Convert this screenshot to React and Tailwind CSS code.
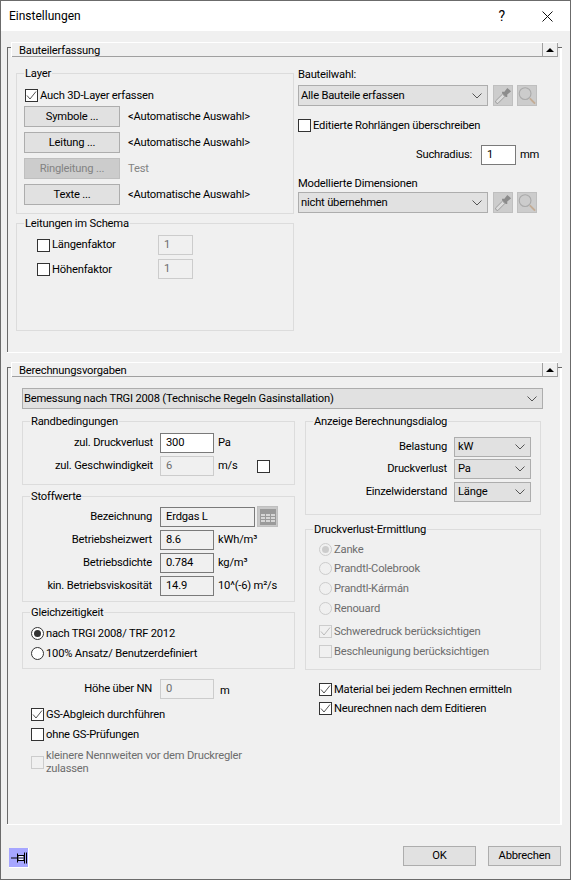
import React from "react";

const Chevron = () => (
  <svg width="10" height="6" viewBox="0 0 10 6" className="shrink-0">
    <path d="M0.5 0.5 L5 5 L9.5 0.5" fill="none" stroke="#555" strokeWidth="1" />
  </svg>
);

const Check = ({ color = "#555" }) => (
  <svg width="11" height="11" viewBox="0 0 11 11">
    <path d="M1 5.5 L4 9 L10 1.5" fill="none" stroke={color} strokeWidth="1" />
  </svg>
);

const CheckBox = ({ checked, disabled, className = "" }) => (
  <span
    className={`flex items-center justify-center w-[13px] h-[13px] shrink-0 border ${
      disabled ? "border-[#cccccc]" : "border-[#333333]"
    } ${disabled ? "bg-[#f0f0f0]" : "bg-white"} ${className}`}
  >
    {checked && <Check color={disabled ? "#bbbbbb" : "#555555"} />}
  </span>
);

const Radio = ({ checked, disabled }) => (
  <span
    className={`flex items-center justify-center w-[13px] h-[13px] shrink-0 rounded-full border ${
      disabled ? "border-[#cccccc]" : "border-[#333333]"
    } ${disabled ? "bg-[#f0f0f0]" : "bg-white"}`}
  >
    {checked && <span className={`w-[7px] h-[7px] rounded-full ${disabled ? "bg-[#cccccc]" : "bg-[#333333]"}`} />}
  </span>
);

const Btn = ({ children, disabled, className = "" }) => (
  <div
    className={`flex items-center justify-center shrink-0 h-[21px] border ${
      disabled ? "bg-[#cccccc] border-[#bfbfbf] text-[#838383]" : "bg-[#e1e1e1] border-[#adadad]"
    } ${className}`}
  >
    {children}
  </div>
);

const Combo = ({ children, className = "", h = "h-[21px]", pl = "pl-[3px]" }) => (
  <div className={`flex items-center justify-between shrink-0 pr-[5px] bg-[#e1e1e1] border border-[#adadad] ${pl} ${h} ${className}`}>
    <span>{children}</span>
    <Chevron />
  </div>
);

const Field = ({ children, kind = "on", className = "" }) => {
  const cls = {
    edit: "bg-white border-[#7a7a7a]",
    on: "bg-[#f0f0f0] border-[#7a7a7a]",
    off: "bg-[#f0f0f0] border-[#cccccc] text-[#6d6d6d]",
  }[kind];
  return <div className={`flex items-center shrink-0 h-[20px] pl-[5px] border ${cls} ${className}`}>{children}</div>;
};

const Group = ({ title, className = "", children }) => (
  <div className={`relative border border-[#dcdcdc] ${className}`}>
    <span className="absolute top-[-7px] left-[7px] px-[1px] bg-[#f0f0f0] leading-[14px] whitespace-nowrap">{title}</span>
    {children}
  </div>
);

const Dropper = () => (
  <svg width="19" height="19" viewBox="0 0 19 19">
    <path d="M2.5 17.5 L1.5 15.5 L9 8 L11.5 10.5 L4 18 Z" fill="#dcdcdc" stroke="#9a9a9a" strokeWidth="1" />
    <path d="M8.5 5.5 L11 5.5 L14 1.5 L18 5 L14 8.5 L14 11 L12.5 11 L8.5 7 Z" fill="#8c8c8c" />
  </svg>
);

const Lens = () => (
  <svg width="19" height="19" viewBox="0 0 19 19">
    <circle cx="7.5" cy="7.5" r="6.2" fill="none" stroke="#aaaaaa" strokeWidth="1.2" />
    <path d="M12.5 12.5 L18 18" stroke="#c4ac94" strokeWidth="2" />
  </svg>
);

const PickRow = ({ label, className = "" }) => (
  <div className={`flex ${className}`}>
    <Combo className="w-[190px]" pl="pl-[2px]">{label}</Combo>
    <Btn disabled className="w-[20px] ml-[5px]"><Dropper /></Btn>
    <Btn disabled className="w-[20px] ml-[4px]"><Lens /></Btn>
  </div>
);

const Section = ({ title, className = "", children }) => (
  <div className={`ml-[6px] w-[555px] border-l border-t border-[#696969] relative ${className}`}>
    <div className="absolute right-0 bottom-0 w-[2px] h-full border-r-[2px] border-white pointer-events-none" />
    <div className="absolute left-[-1px] right-0 bottom-0 h-[1px] bg-white" />
    <div className="flex mt-[-6px] ml-[3px] w-[547px] h-[15px] bg-[#f0f0f0] border-t border-l border-white relative">
      <div className="flex-1 border-b border-[#a0a0a0] leading-[15px] pl-[7px]">{title}</div>
      <div className="flex items-center justify-center w-[16px] border-b border-l border-r border-[#a0a0a0]">
        <span className="w-0 h-0 border-l-[4px] border-r-[4px] border-b-[4px] border-l-transparent border-r-transparent border-b-black" />
      </div>
    </div>
    {children}
  </div>
);

const Lab = ({ children, className = "" }) => <span className={`ml-[2px] whitespace-nowrap ${className}`}>{children}</span>;

const RightLabel = ({ w, children }) => <span className={`${w} text-right whitespace-nowrap shrink-0`}>{children}</span>;

const LayerRow = ({ label, value, disabled, mt = "mt-[5px]" }) => (
  <div className={`flex items-center ${mt}`}>
    <Btn disabled={disabled} className="w-[96px]">{label}</Btn>
    <span className={`ml-[8px] ${disabled ? "text-[#838383]" : ""}`}>{value}</span>
  </div>
);

const DisRadio = ({ label, checked, mt }) => (
  <div className={`flex items-center h-[13px] ${mt}`}>
    <Radio disabled checked={checked} />
    <Lab className="text-[#6d6d6d]">{label}</Lab>
  </div>
);

export default function App() {
  return (
    <div className="w-[571px] h-[880px] bg-[#f0f0f0] border border-[#6b6b6b] text-[11.2px] tracking-[-0.2px] leading-[14px] text-black overflow-hidden font-['Roboto',sans-serif]">
      <div className="flex items-center justify-between h-[30px] bg-white pl-[8px]">
        <span className="text-[12px] tracking-normal">Einstellungen</span>
        <div className="flex items-center">
          <span className="text-[14px] mr-[37px]">?</span>
          <svg width="11" height="11" viewBox="0 0 11 11" className="mr-[17px]">
            <path d="M0.5 0.5 L10.5 10.5 M10.5 0.5 L0.5 10.5" stroke="#111" strokeWidth="1" fill="none" />
          </svg>
        </div>
      </div>

      <Section title="Bauteilerfassung" className="mt-[16px] h-[306px]">
        <div className="flex pl-[8px] pt-[11px]">
          <div className="w-[278px] mt-[5px]">
            <Group title="Layer" className="h-[141px] pl-[7px] pt-[15px]">
              <div className="flex items-center h-[13px] ml-[1px]">
                <CheckBox checked />
                <Lab>Auch 3D-Layer erfassen</Lab>
              </div>
              <LayerRow label="Symbole ..." value="<Automatische Auswahl>" mt="mt-[4px]" />
              <LayerRow label="Leitung ..." value="<Automatische Auswahl>" />
              <LayerRow label="Ringleitung ..." value="Test" disabled />
              <LayerRow label="Texte ..." value="<Automatische Auswahl>" />
            </Group>
            <Group title="Leitungen im Schema" className="h-[108px] mt-[9px] pl-[20px] pt-[11px]">
              <div className="flex items-center">
                <div className="flex items-center w-[121px]"><CheckBox /><Lab>Längenfaktor</Lab></div>
                <Field kind="off" className="w-[35px]">1</Field>
              </div>
              <div className="flex items-center mt-[4px]">
                <div className="flex items-center w-[121px] mt-[1px]"><CheckBox /><Lab>Höhenfaktor</Lab></div>
                <Field kind="off" className="w-[35px]">1</Field>
              </div>
            </Group>
          </div>

          <div className="ml-[4px] w-[240px]">
            <div className="h-[12px] leading-[14px]">Bauteilwahl:</div>
            <PickRow label="Alle Bauteile erfassen" className="mt-[5px]" />
            <div className="flex items-center h-[13px] mt-[13px]">
              <CheckBox />
              <Lab>Editierte Rohrlängen überschreiben</Lab>
            </div>
            <div className="flex items-center mt-[13px]">
              <RightLabel w="w-[174px]">Suchradius:</RightLabel>
              <Field kind="edit" className="w-[35px] ml-[9px]">1</Field>
              <span className="ml-[4px]">mm</span>
            </div>
            <div className="h-[12px] leading-[14px] mt-[12px]">Modellierte Dimensionen</div>
            <PickRow label="nicht übernehmen" className="mt-[3px]" />
          </div>
        </div>
      </Section>

      <Section title="Berechnungsvorgaben" className="mt-[14px] h-[458px]">
        <Combo className="w-[521px] ml-[14px] mt-[11px]" pl="pl-[1px]">Bemessung nach TRGI 2008 (Technische Regeln Gasinstallation)</Combo>
        <div className="flex ml-[14px] mt-[12px]">
          <div className="w-[273px]">
            <Group title="Randbedingungen" className="h-[64px] pt-[11px]">
              <div className="flex items-center">
                <RightLabel w="w-[130px]">zul. Druckverlust</RightLabel>
                <Field kind="edit" className="w-[54px] ml-[7px]">300</Field>
                <span className="ml-[4px]">Pa</span>
              </div>
              <div className="flex items-center mt-[3px]">
                <RightLabel w="w-[130px]">zul. Geschwindigkeit</RightLabel>
                <Field kind="off" className="w-[54px] ml-[7px]">6</Field>
                <span className="ml-[4px] w-[39px]">m/s</span>
                <CheckBox />
              </div>
            </Group>
            <Group title="Stoffwerte" className="h-[106px] mt-[11px] pt-[9px]">
              <div className="flex items-center">
                <RightLabel w="w-[129px]">Bezeichnung</RightLabel>
                <Field className="w-[95px] ml-[8px]">Erdgas L</Field>
                <div className="flex items-center justify-center w-[21px] h-[21px] ml-[2px] bg-[#c8c8c8] border border-[#bfbfbf]">
                  <svg width="16" height="16" viewBox="0 0 16 16">
                    <rect x="0" y="0" width="16" height="16" fill="#9a9a9a" />
                    <path d="M1 5h4v2h-4zM6 5h4v2h-4zM11 5h4v2h-4zM1 8h4v2h-4zM6 8h4v2h-4zM11 8h4v2h-4zM1 11h4v2h-4zM6 11h4v2h-4zM11 11h4v2h-4z" fill="#d6d6d6" />
                  </svg>
                </div>
              </div>
              {[
                ["Betriebsheizwert", "8.6", "kWh/m³"],
                ["Betriebsdichte", "0.784", "kg/m³"],
                ["kin. Betriebsviskosität", "14.9", "10^(-6) m²/s"],
              ].map(([a, b, c]) => (
                <div key={a} className="flex items-center mt-[3px]">
                  <RightLabel w="w-[129px]">{a}</RightLabel>
                  <Field className="w-[54px] ml-[8px]">{b}</Field>
                  <span className="ml-[4px] whitespace-nowrap">{c}</span>
                </div>
              ))}
            </Group>
            <Group title="Gleichzeitigkeit" className="h-[57px] mt-[10px] pl-[8px] pt-[14px]">
              <div className="flex items-center h-[13px]"><Radio checked /><Lab>nach TRGI 2008/ TRF 2012</Lab></div>
              <div className="flex items-center h-[13px] mt-[7px]"><Radio /><Lab>100% Ansatz/ Benutzerdefiniert</Lab></div>
            </Group>
            <div className="flex items-center mt-[10px]">
              <RightLabel w="w-[130px]">Höhe über NN</RightLabel>
              <Field kind="off" className="w-[54px] ml-[8px]">0</Field>
              <span className="ml-[6px] mt-[3px]">m</span>
            </div>
            <div className="flex items-center h-[13px] mt-[9px] ml-[9px]"><CheckBox checked /><Lab>GS-Abgleich durchführen</Lab></div>
            <div className="flex items-center h-[13px] mt-[7px] ml-[9px]"><CheckBox /><Lab>ohne GS-Prüfungen</Lab></div>
            <div className="flex items-center h-[26px] mt-[8px] ml-[9px]">
              <CheckBox disabled />
              <span className="ml-[2px] w-[225px] leading-[13px] text-[#6d6d6d]">kleinere Nennweiten vor dem Druckregler zulassen</span>
            </div>
          </div>

          <div className="w-[236px] ml-[10px]">
            <Group title="Anzeige Berechnungsdialog" className="h-[94px] pt-[15px]">
              {[
                ["Belastung", "kW", ""],
                ["Druckverlust", "Pa", "mt-[2px]"],
                ["Einzelwiderstand", "Länge", "mt-[3px]"],
              ].map(([a, b, m]) => (
                <div key={a} className={`flex items-center ${m}`}>
                  <RightLabel w="w-[141px]">{a}</RightLabel>
                  <Combo h="h-[20px]" className="w-[77px] ml-[7px]">{b}</Combo>
                </div>
              ))}
            </Group>
            <Group title="Druckverlust-Ermittlung" className="h-[141px] mt-[14px] pl-[13px] pt-[13px]">
              <DisRadio label="Zanke" checked />
              <DisRadio label="Prandtl-Colebrook" mt="mt-[6px]" />
              <DisRadio label="Prandtl-Kármán" mt="mt-[7px]" />
              <DisRadio label="Renouard" mt="mt-[7px]" />
              <div className="flex items-center h-[13px] mt-[10px]"><CheckBox checked disabled /><Lab className="text-[#6d6d6d]">Schweredruck berücksichtigen</Lab></div>
              <div className="flex items-center h-[13px] mt-[7px]"><CheckBox disabled /><Lab className="text-[#6d6d6d]">Beschleunigung berücksichtigen</Lab></div>
            </Group>
            <div className="flex items-center h-[13px] mt-[13px] ml-[14px]"><CheckBox checked /><Lab>Material bei jedem Rechnen ermitteln</Lab></div>
            <div className="flex items-center h-[13px] mt-[6px] ml-[14px]"><CheckBox checked /><Lab>Neurechnen nach dem Editieren</Lab></div>
          </div>
        </div>
      </Section>

      <div className="flex items-start justify-between pt-[21px] pl-[8px] pr-[9px]">
        <div className="flex items-center justify-center w-[20px] h-[20px] mt-[2px] bg-[#a6a6ff] border-r border-b border-white">
          <svg width="16" height="12" viewBox="0 0 16 12">
            <path d="M0 6h6" stroke="#000" strokeWidth="1" fill="none" />
            <path d="M6.5 1.5v9" stroke="#000" strokeWidth="1" fill="none" />
            <path d="M7 3.5h6v5h-6z" fill="#f4f4ff" stroke="#000" strokeWidth="1" />
            <path d="M13.5 0.5v11M15.5 0.5v11" stroke="#000" strokeWidth="1" fill="none" />
            <path d="M7 6h6" stroke="#55557f" strokeWidth="1.5" fill="none" />
          </svg>
        </div>
        <div className="flex">
          <Btn className="w-[73px] !h-[20px]">OK</Btn>
          <Btn className="w-[73px] !h-[20px] ml-[12px]">Abbrechen</Btn>
        </div>
      </div>
    </div>
  );
}
